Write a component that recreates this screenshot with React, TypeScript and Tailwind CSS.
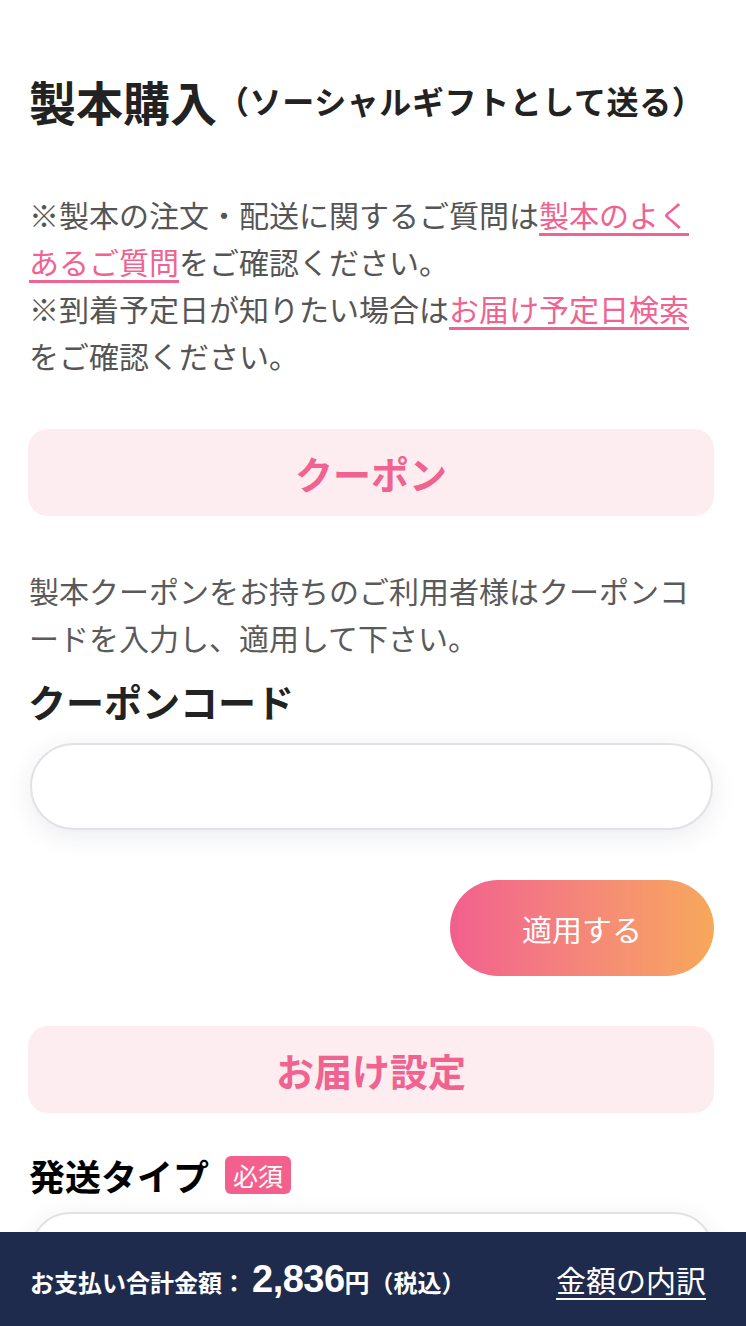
import React from "react";

const font = { fontFamily: '"Noto Sans CJK JP", "Noto Sans", sans-serif' };

const SectionHeader: React.FC<{ title: string }> = ({ title }) => (
    <div className="h-[87px] rounded-[20px] bg-[#fdedf1] flex items-center justify-center">
        <h2 className="text-[38px] font-bold text-[#f0628f] leading-none">{title}</h2>
    </div>
);

const App: React.FC = () => {
    return (
        <div className="min-h-screen bg-white" style={font}>
            <div className="pl-[28px] pr-[32px] pt-[70px] pb-[260px]">
                {/* タイトル */}
                <h1 className="h-[60px] flex items-center text-[#222] font-bold pl-[1px]">
                    <span className="text-[47px] leading-none">製本購入</span>
                    <span className="text-[32px] leading-none tracking-[0.6px]">（ソーシャルギフトとして送る）</span>
                </h1>

                <p className="mt-[61px] pl-[1px] text-[30px] leading-[47px] text-[#555]">
                    ※製本の注文・配送に関するご質問は
                    <a href="#" className="text-[#f0628f] underline underline-offset-[6px] decoration-[3px]">
                        製本のよくあるご質問
                    </a>
                    をご確認ください。
                    <br />
                    ※到着予定日が知りたい場合は
                    <a href="#" className="text-[#f0628f] underline underline-offset-[6px] decoration-[3px]">
                        お届け予定日検索
                    </a>
                    をご確認ください。
                </p>

                {/* クーポン */}
                <div className="mt-[50px]">
                    <SectionHeader title="クーポン" />
                </div>

                <p className="mt-[51px] pl-[1px] text-[30px] leading-[47px] text-[#5a5a5a]">
                    製本クーポンをお持ちのご利用者様はクーポンコードを入力し、適用して下さい。
                </p>

                <h3 className="mt-[14px] h-[50px] flex items-center text-[38px] font-bold text-[#222]">
                    クーポンコード
                </h3>

                <input
                    type="text"
                    className="mt-[18px] ml-[2px] block w-[683px] h-[87px] rounded-full border-2 border-[#e2e2e6] bg-white px-8 text-[30px] outline-none shadow-[0_6px_26px_rgba(30,40,80,0.09)]"
                />

                <div className="mt-[50px] flex justify-end">
                    <button className="w-[264px] h-[96px] rounded-full bg-gradient-to-r from-[#f15f8e] to-[#f7a85a] text-white text-[30px]">
                        適用する
                    </button>
                </div>

                {/* お届け設定 */}
                <div className="mt-[50px]">
                    <SectionHeader title="お届け設定" />
                </div>

                <div className="mt-[37px] h-[50px] flex items-center gap-4">
                    <h3 className="text-[36px] font-bold text-black leading-none pl-[1px]">発送タイプ</h3>
                    <span className="h-[38px] px-[8px] rounded-[6px] bg-[#f4608e] text-white text-[25px] flex items-center leading-none">
                        必須
                    </span>
                </div>

                <div className="mt-[12px] ml-[2px] h-[87px] rounded-[40px] border-2 border-[#e2e2e6] bg-white shadow-[0_6px_26px_rgba(30,40,80,0.09)]" />
            </div>

            {/* 合計金額バー */}
            <div className="fixed bottom-0 left-0 right-0 h-[94px] bg-[#1f2b4c] flex items-center justify-between pl-[30px] pr-[40px] text-white">
                <div className="flex items-baseline font-bold">
                    <span className="text-[24px]">お支払い合計金額：</span>
                    <span className="text-[38px] ml-[6px] tracking-[-0.5px]" style={{ fontFamily: '"Liberation Sans", sans-serif' }}>2,836</span>
                    <span className="text-[25px]">円</span>
                    <span className="text-[24px]">（税込）</span>
                </div>
                <a href="#" className="text-[30px] underline underline-offset-[6px] decoration-2">
                    金額の内訳
                </a>
            </div>
        </div>
    );
};

export default App;
